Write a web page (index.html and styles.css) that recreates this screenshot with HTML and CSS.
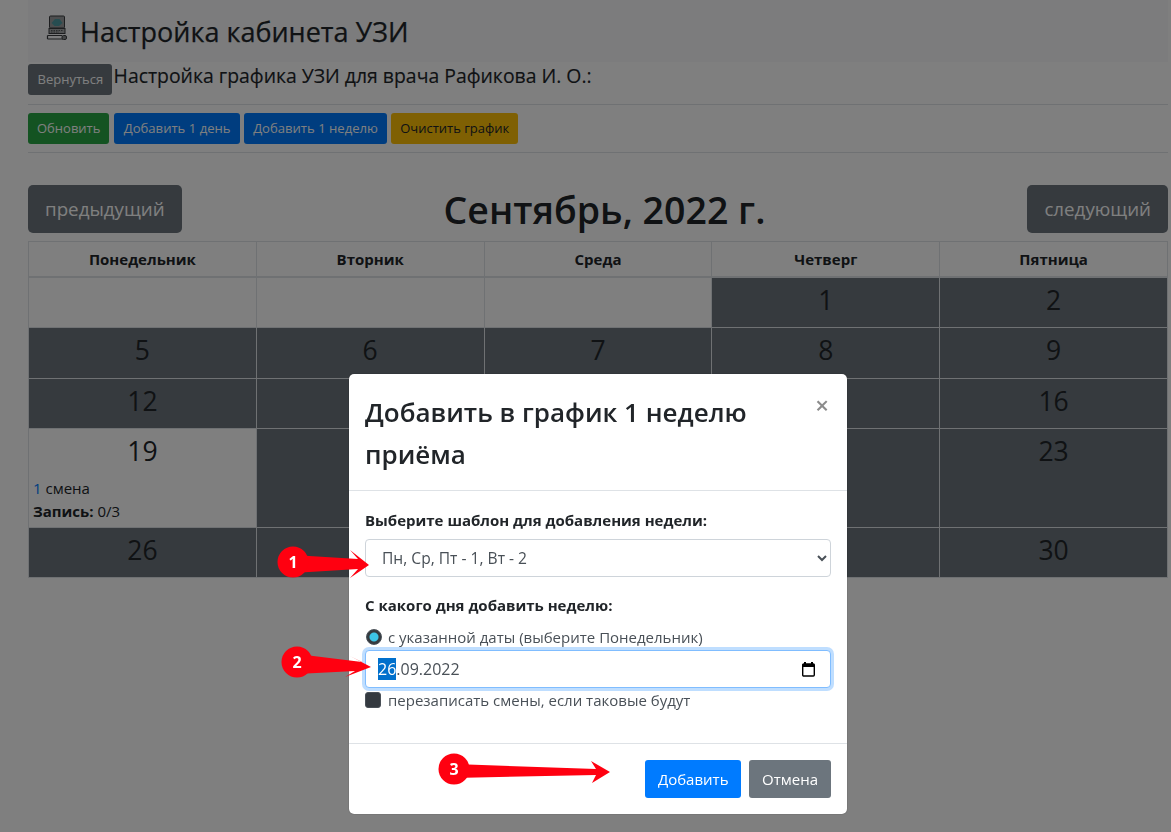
FILE: index.html
```html
<!DOCTYPE html>
<html>

<head>
    <meta charset="utf-8" />
    <title>Настройка кабинета УЗИ</title>
    <link rel="stylesheet" href="styles.css">
</head>

<body>
    <div class="page">
        <div class="cabinet-head">
            <svg class="cabinet-icon" width="22" height="26" viewBox="0 0 22 26">
                <rect x="3.5" y="1" width="15" height="12" rx="1" fill="#9a9d9f" stroke="#3a3d40" />
                <path d="M5.5 8 L9 4 H13.5 L16.5 8 L13 11 H8.5 Z" fill="#4f9aa3" />
                <rect x="3" y="13.5" width="16" height="5" fill="#a5a7a9" stroke="#3a3d40" />
                <path d="M5 15.5 H17 M5 17 H13" stroke="#55585a" stroke-dasharray="1.5 1" />
                <path d="M1.5 20.5 H16 M1.5 24 H17 M1.5 20.5 V24" fill="none" stroke="#3a3d40" stroke-width="1.2" />
                <rect x="16" y="20.5" width="4.5" height="4" rx="1.5" fill="#8a8d8f" stroke="#3a3d40" />
            </svg>
            <h2>Настройка кабинета УЗИ</h2>
        </div>
        <div class="doctor-row">
            <a class="btn btn-gray">Вернуться</a>
            <h5>Настройка графика УЗИ для врача Рафикова И. О.:</h5>
        </div>
        <hr>
        <div class="actions">
            <a class="btn btn-green">Обновить</a>
            <a class="btn btn-blue">Добавить 1 день</a>
            <a class="btn btn-blue">Добавить 1 неделю</a>
            <a class="btn btn-yellow">Очистить график</a>
        </div>
        <hr>
        <div class="month-row">
            <a class="btn btn-gray btn-lg">предыдущий</a>
            <h1>Сентябрь, 2022 г.</h1>
            <a class="btn btn-gray btn-lg">следующий</a>
        </div>
        <table id="calendar">
            <thead>
                <tr>
                    <th>Понедельник</th>
                    <th>Вторник</th>
                    <th>Среда</th>
                    <th>Четверг</th>
                    <th>Пятница</th>
                </tr>
            </thead>
            <tbody>
                <tr>
                    <td></td>
                    <td></td>
                    <td></td>
                    <td class="off"><div class="num">1</div></td>
                    <td class="off"><div class="num">2</div></td>
                </tr>
                <tr>
                    <td class="off"><div class="num">5</div></td>
                    <td class="off"><div class="num">6</div></td>
                    <td class="off"><div class="num">7</div></td>
                    <td class="off"><div class="num">8</div></td>
                    <td class="off"><div class="num">9</div></td>
                </tr>
                <tr>
                    <td class="off"><div class="num">12</div></td>
                    <td class="off"></td>
                    <td class="off"></td>
                    <td class="off"></td>
                    <td class="off"><div class="num">16</div></td>
                </tr>
                <tr>
                    <td>
                        <div class="num">19</div>
                        <div class="shift"><span class="shift-no">1</span> смена</div>
                        <div class="shift"><b>Запись:</b> 0/3</div>
                    </td>
                    <td class="off"></td>
                    <td class="off"></td>
                    <td class="off"></td>
                    <td class="off"><div class="num">23</div></td>
                </tr>
                <tr>
                    <td class="off"><div class="num">26</div></td>
                    <td class="off"></td>
                    <td class="off"></td>
                    <td class="off"></td>
                    <td class="off"><div class="num">30</div></td>
                </tr>
            </tbody>
        </table>
    </div>

    <div class="backdrop"></div>

    <div class="modal">
        <div class="modal-head">
            <h4>Добавить в график 1 неделю приёма</h4>
            <span class="close">×</span>
        </div>
        <div class="modal-body">
            <label class="field-label">Выберите шаблон для добавления недели:</label>
            <select class="field select-field">
                <option>Пн, Ср, Пт - 1, Вт - 2</option>
            </select>
            <label class="field-label second">С какого дня добавить неделю:</label>
            <div class="check-row">
                <input type="radio" checked>
                <span>с указанной даты (выберите Понедельник)</span>
            </div>
            <div class="field date-field">
                <span><span class="selected">26</span>.09.2022</span>
                <svg width="13" height="15" viewBox="0 0 13 15">
                    <path d="M3 0 V2 M10 0 V2" stroke="#000" stroke-width="2" />
                    <rect x="0.7" y="2" width="11.6" height="12" rx="1" fill="#fff" stroke="#000" stroke-width="1.4" />
                    <rect x="0.7" y="2" width="11.6" height="3" fill="#000" />
                </svg>
            </div>
            <div class="check-row">
                <input type="checkbox">
                <span>перезаписать смены, если таковые будут</span>
            </div>
        </div>
        <div class="modal-foot">
            <a class="btn btn-primary">Добавить</a>
            <a class="btn btn-cancel">Отмена</a>
        </div>
    </div>

    <!-- numbered arrows pasted on top of the screenshot -->
    <svg class="marks" width="1171" height="832" viewBox="0 0 1171 832">
        <g fill="#ff0010">
            <path d="M293 555 L358 559 L350 550 L369 565 L350 578 L358 569 L293 573 Z" />
            <circle cx="293" cy="562" r="15.5" />
            <path d="M297 654 L362 662 L350 656 L371 667 L345 677 L355 671 L297 674 Z" />
            <circle cx="297" cy="662" r="15.5" />
            <path d="M454 764 L596 769 L591 761 L610 772 L592 783 L596 775 L454 778 Z" />
            <circle cx="454" cy="769" r="15.5" />
        </g>
        <g class="mark-no" fill="#fff" text-anchor="middle">
            <text x="293" y="568">1</text>
            <text x="297" y="668">2</text>
            <text x="454" y="775">3</text>
        </g>
    </svg>
</body>

</html>
```
FILE: styles.css
```css
html, body {
    margin: 0;
    padding: 0;
}

body {
    height: 832px;
    overflow: hidden;
    font-family: "Open Sans", "Noto Sans", sans-serif;
    font-size: 15px;
    color: #212529;
    background-color: #fff;
}

.page {
    width: 1140px;
    margin-left: 28px;
}

.cabinet-head {
    display: flex;
    align-items: center;
    gap: 12px;
    height: 62px;
    padding-left: 18px;
    background-color: #f8f9fa;
    box-sizing: border-box;
}

.cabinet-icon {
    margin-top: -6px;
}

h2 {
    margin: 0;
    font-size: 27px;
    font-weight: 500;
    -webkit-text-stroke: 0.25px #212529;
}

.doctor-row {
    display: flex;
    align-items: flex-start;
    height: 42px;
    padding-top: 2px;
    box-sizing: border-box;
}

h5 {
    margin: 0 0 0 2px;
    font-size: 19.4px;
    font-weight: 500;
    line-height: 24px;
    -webkit-text-stroke: 0.15px #212529;
}

hr {
    margin: 0;
    border: 0;
    border-top: 1px solid #dee2e6;
}

.btn {
    display: inline-block;
    box-sizing: border-box;
    padding: 0 9px;
    height: 31px;
    line-height: 31px;
    font-size: 13px;
    border-radius: 3px;
    white-space: nowrap;
    color: #fff;
}

.btn-gray {
    background-color: #6c757d;
}

.doctor-row .btn {
    padding: 0 8.5px 0 9.5px;
}

.btn-green {
    background-color: #28a745;
    margin-right: 1px;
}

.btn-blue {
    background-color: #007bff;
    font-size: 13.1px;
    padding: 0 9.3px;
}

.btn-yellow {
    background-color: #ffc107;
    color: #212529;
}

.btn-lg {
    height: 48px;
    line-height: 48px;
    padding: 0 17px;
    font-size: 18.75px;
    border-radius: 5px;
}

.actions {
    display: flex;
    gap: 4px;
    padding: 8px 0;
}

.month-row {
    display: flex;
    justify-content: space-between;
    align-items: center;
    margin-top: 32px;
    height: 48px;
}

h1 {
    margin: 2px 0 0;
    font-size: 37.5px;
    font-weight: 600;
    line-height: 48px;
}

#calendar {
    width: 1140px;
    margin-top: 8px;
    table-layout: fixed;
    border-collapse: collapse;
}

#calendar th, #calendar td {
    border: 1px solid #dee2e6;
    padding: 0;
}

#calendar th {
    height: 34px;
    font-size: 15px;
    font-weight: 700;
    border-bottom-width: 2px;
}

#calendar td {
    height: 49.3px;
    vertical-align: top;
}

#calendar td.off {
    background-color: #6c757d;
}

.num {
    height: 48px;
    font-size: 26.5px;
    font-weight: 500;
    line-height: 45px;
    text-align: center;
}

.shift {
    padding-left: 4px;
    line-height: 23px;
    font-size: 15px;
}

.shift:last-child {
    padding-bottom: 4px;
}

.shift-no {
    color: #007bff;
}

.backdrop {
    position: fixed;
    top: 0;
    left: 0;
    width: 100%;
    height: 100%;
    background-color: rgba(0, 0, 0, 0.5);
}

.modal {
    position: absolute;
    top: 374px;
    left: 349px;
    width: 498px;
    height: 440px;
    display: flex;
    flex-direction: column;
    box-sizing: border-box;
    background-color: #fff;
    border-radius: 5px;
    box-shadow: 0 0 1px rgba(0, 0, 0, 0.6);
}

.modal-head {
    display: flex;
    justify-content: space-between;
    height: 117px;
    box-sizing: border-box;
    padding: 17px 18px 0 16px;
    border-bottom: 1px solid #dee2e6;
}

h4 {
    margin: 0;
    width: 420px;
    font-size: 26px;
    font-weight: 600;
    line-height: 42px;
}

.close {
    font-size: 24px;
    font-weight: 600;
    line-height: 28px;
    color: #8c8c8c;
}

.modal-body {
    height: 253px;
    box-sizing: border-box;
    padding: 19px 16px 0;
    border-bottom: 1px solid #dee2e6;
}

.field-label {
    display: block;
    font-size: 15px;
    font-weight: 700;
    line-height: 20px;
    margin-bottom: 9px;
}

.field-label.second {
    margin-top: 18px;
    margin-bottom: 10px;
}

.field {
    display: block;
    width: 466px;
    height: 38px;
    box-sizing: border-box;
    border: 1px solid #ced4da;
    border-radius: 4px;
    padding: 0 15px 0 12px;
    background-color: #fff;
    font-family: inherit;
    font-size: 16px;
    color: #495057;
}

.select-field {
    font-size: 15.6px;
    padding-right: 0;
}

.date-field {
    display: flex;
    align-items: center;
    justify-content: space-between;
    margin-top: 1px;
    border-color: #80bdff;
    box-shadow: 0 0 0 3px rgba(0, 123, 255, 0.25);
}

.selected {
    background-color: #0070cc;
    color: #fff;
}

.check-row {
    display: flex;
    align-items: center;
    gap: 7px;
    height: 24px;
    color: #495057;
}

.check-row input {
    appearance: none;
    flex: none;
    width: 16px;
    height: 16px;
    margin: 0;
    background-color: #343a40;
    border: 1px solid #495057;
}

.check-row input[type="radio"] {
    margin-left: 1px;
    margin-right: -1px;
    border-radius: 50%;
    background: radial-gradient(circle, #3cc4e6 0 4px, #343a40 5px);
}

.check-row input[type="checkbox"] {
    border-radius: 3px;
}

.modal-foot {
    display: flex;
    justify-content: flex-end;
    gap: 8px;
    padding-top: 16px;
    padding-right: 16px;
}

.btn-primary, .btn-cancel {
    height: 38px;
    line-height: 38px;
    padding: 0 13px;
    font-size: 15px;
}

.btn-primary {
    background-color: #007bff;
    margin-left: 1px;
    padding: 0 12.5px;
}

.btn-cancel {
    background-color: #6c757d;
}

.marks {
    position: absolute;
    top: 0;
    left: 0;
}

.mark-no {
    font-size: 16px;
    font-weight: 700;
}
```
